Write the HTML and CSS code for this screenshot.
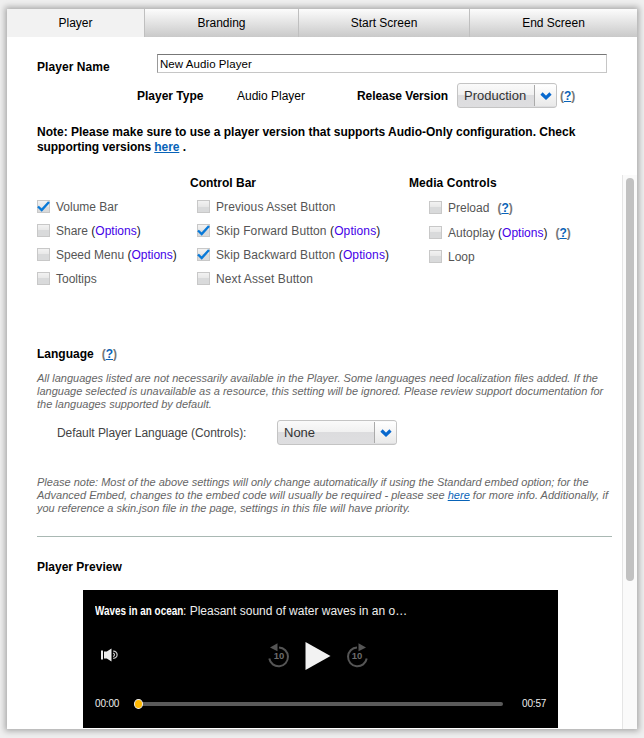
FILE: index.html
```html
<!DOCTYPE html>
<html lang="en">
<head>
<meta charset="utf-8">
<title>Player settings</title>
<link rel="stylesheet" href="styles.css">
</head>
<body>
<main class="panel">
  <nav class="tabs">
    <a class="tab active">Player</a>
    <a class="tab">Branding</a>
    <a class="tab">Start Screen</a>
    <a class="tab">End Screen</a>
  </nav>
  <section class="general">
    <div class="name-row">
      <label class="strong" for="name">Player Name</label>
      <input id="name" class="name-input" type="text" value="New Audio Player">
    </div>
    <div class="type-row">
      <span class="strong type-label">Player Type</span>
      <span class="type-value">Audio Player</span>
      <span class="strong version-label">Release Version</span>
      <span class="select version-select"><span class="select-text">Production</span><span class="select-arrow"><svg width="12" height="8" viewBox="0 0 12 8"><path d="M1.500 1.500 6 5.800 10.500 1.500"/></svg></span></span>
      <span class="help">(<a>?</a>)</span>
    </div>
    <p class="note"><span class="line1">Note: Please make sure to use a player version that supports Audio-Only configuration. Check</span><br><span class="line2">supporting versions <a>here</a> .</span></p>
  </section>
  <div class="scroll">
    <div class="content">
      <div class="options">
        <div class="col col-a">
          <h2>&nbsp;</h2>
          <div class="opt"><i class="box on"><svg viewBox="0 0 13 13"><path d="M1 6.500 4.700 10 12 2"/></svg></i><span>Volume Bar</span></div>
          <div class="opt"><i class="box"></i><span>Share <b>(<a>Options</a>)</b></span></div>
          <div class="opt"><i class="box"></i><span>Speed Menu <b>(<a>Options</a>)</b></span></div>
          <div class="opt"><i class="box"></i><span>Tooltips</span></div>
        </div>
        <div class="col col-b">
          <h2>Control Bar</h2>
          <div class="opt"><i class="box"></i><span>Previous Asset Button</span></div>
          <div class="opt"><i class="box on"><svg viewBox="0 0 13 13"><path d="M1 6.500 4.700 10 12 2"/></svg></i><span>Skip Forward Button <b>(<a>Options</a>)</b></span></div>
          <div class="opt"><i class="box on"><svg viewBox="0 0 13 13"><path d="M1 6.500 4.700 10 12 2"/></svg></i><span>Skip Backward Button <b>(<a>Options</a>)</b></span></div>
          <div class="opt"><i class="box"></i><span>Next Asset Button</span></div>
        </div>
        <div class="col col-c">
          <h2>Media Controls</h2>
          <div class="opt"><i class="box"></i><span>Preload</span><span class="help">(<a>?</a>)</span></div>
          <div class="opt"><i class="box"></i><span>Autoplay <b>(<a>Options</a>)</b></span><span class="help">(<a>?</a>)</span></div>
          <div class="opt"><i class="box"></i><span>Loop</span></div>
        </div>
      </div>
      <div class="language-head"><h2>Language</h2><span class="help">(<a>?</a>)</span></div>
      <p class="hint">All languages listed are not necessarily available in the Player. Some languages need localization files added. If the<br>language selected is unavailable as a resource, this setting will be ignored. Please review support documentation for<br>the languages supported by default.</p>
      <div class="language-row">
        <span class="language-label">Default Player Language (Controls):</span>
        <span class="select language-select"><span class="select-text">None</span><span class="select-arrow"><svg width="12" height="8" viewBox="0 0 12 8"><path d="M1.500 1.500 6 5.800 10.500 1.500"/></svg></span></span>
      </div>
      <p class="hint hint-embed">Please note: Most of the above settings will only change automatically if using the Standard embed option; for the<br><span class="wide">Advanced Embed, changes to the embed code will usually be required - please see <a>here</a> for more info. Additionally, if</span><br><span>you reference a skin.json file in the page, settings in this file will have priority.</span></p>
      <hr>
      <h2 class="preview-head">Player Preview</h2>
      <div class="player">
        <div class="title"><b>Waves in an ocean</b>: <span>Pleasant sound of water waves in an o…</span></div>
        <div class="controls">
          <svg class="volume" width="20" height="16" viewBox="0 0 20 16"><path fill="#eee" d="M1 3.500h2v9H1zM4 4.500h2.800L11.500 1.500v13L6.800 11.500H4z"/><path fill="none" stroke="#ccc" stroke-width="1.200" d="M13.200 4.200c4.900-.5 5.500 7.300 0 7.100M13 6.200c2 .2 2 3 0 3.300"/></svg>
          <span class="transport">
            <svg width="24" height="28" viewBox="0 0 24 28"><path class="ring" d="M12 5.500A9.400 9.400 0 1 1 2.300 16.500"/><path class="head" d="M3 5.500 10.500 1.200v8z"/><text x="12" y="17.200">10</text></svg>
            <svg class="play" width="26" height="30" viewBox="0 0 26 30"><path fill="#f2f2f2" d="M.5 1 25.500 15 .5 29z"/></svg>
            <svg width="24" height="28" viewBox="0 0 24 28"><path class="ring" d="M12 5.500A9.400 9.400 0 1 0 21.700 16.500"/><path class="head" d="M21 5.500 13.500 1.200v8z"/><text x="12" y="17.200">10</text></svg>
          </span>
        </div>
        <div class="timeline"><span>00:00</span><div class="track"><i class="knob"></i></div><span>00:57</span></div>
      </div>
    </div>
    <div class="scrollbar"><div class="thumb"></div></div>
  </div>
</main>
</body>
</html>
```
FILE: styles.css
```css
* { box-sizing: border-box; }
body {
  margin: 0;
  height: 738px;
  padding: 9px 7px;
  overflow: hidden;
  background: #efefef;
  font: 12px/16px "Liberation Sans", Arial, sans-serif;
  color: #000;
  white-space: nowrap;
}
h2, p { margin: 0; font-size: 12px; }
h2, .strong, .note { font-weight: bold; }
.panel {
  width: 630px;
  height: 720px;
  background: #fff;
  box-shadow: 0 0 6px 2px rgba(0, 0, 0, .3);
}
.tabs { display: grid; grid-template-columns: 137px 154px 171px 168px; height: 28px; }
.tab {
  border-left: 1px solid #bfbfbf;
  background: linear-gradient(#fcfcfc, #e3e3e3 50%, #c9c9c9);
  text-align: center;
  line-height: 28px;
}
.tab.active { border: 0; background: #f2f2f2; }
.general { height: 138px; padding: 17px 30px 0; }
.name-row { display: flex; height: 29px; }
.name-row .strong { width: 120px; padding-top: 5px; letter-spacing: .07px; }
.name-input {
  width: 450px;
  height: 19px;
  padding: 0 2px;
  border: 1px solid #c6c6c6;
  border-top-color: #777;
  border-left-color: #999;
  font: 11.5px "Liberation Sans", Arial, sans-serif;
  letter-spacing: .07px;
}
.type-row { display: flex; align-items: center; height: 25px; }
.type-label { width: 100px; margin-left: 100px; }
.type-value { width: 120px; }
.version-label { width: 100px; letter-spacing: -.07px; }
.select {
  display: flex;
  height: 25px;
  border: 1px solid #c4c4c4;
  border-radius: 3px;
  background: linear-gradient(#fafafa, #f0f0f0 50%, #dcdcde 50%, #dedee0);
  color: #333;
  font-size: 13px;
  line-height: 24px;
}
.select-text { flex: 1; padding-left: 6px; }
.select-arrow {
  display: flex;
  align-items: center;
  justify-content: center;
  width: 22px;
  margin: 1px 0;
  border-left: 1px solid #aaa;
  background: linear-gradient(#fff, #e9e9e9);
}
.select-arrow path { fill: none; stroke: #0868ce; stroke-width: 3.200; }
.version-select { width: 100px; }
.help { color: #777; font-weight: bold; }
.type-row .help { margin-left: 3px; }
.help a, .note a, .hint a { color: #0863b8; text-decoration: underline; }
.note { margin-top: 17px; line-height: 15px; }
.line2 { letter-spacing: -.07px; }
.scroll { display: flex; height: 554px; }
.content { width: 615px; padding: 0 9px 0 30px; overflow: hidden; }
.scrollbar { width: 15px; padding: 3px 2px 0 3px; border-left: 1px solid #e5e5e5; background: #fafafa; }
.thumb { width: 8px; height: 403px; border-radius: 4px; background: #c1c1c1; }
.options { display: grid; grid-template-columns: 160px 232px 1fr; height: 171px; }
.col h2 { height: 24px; }
.col-b h2 { margin-left: -7px; }
.col-c h2 { height: 25px; margin-left: -20px; letter-spacing: .07px; }
.col-b .opt { letter-spacing: .1px; }
.opt { display: flex; align-items: center; height: 16px; margin-bottom: 8px; color: #555; }
.col-c .opt:nth-child(2) { margin-bottom: 9px; }
.opt b { color: #222; font-weight: normal; }
.opt b a { color: #4400e8; }
.opt .help { margin-left: 8px; }
.box {
  width: 13px;
  height: 13px;
  margin: 0 6px 2px 0;
  border: 1px solid #c8c8c8;
  background: linear-gradient(#f2f2f2, #e7e7e7 50%, #d9dadb 50%);
}
.box svg { display: block; width: 13px; height: 13px; margin: -1px; }
.box path { fill: none; stroke: #0879d8; stroke-width: 2.400; }
.language-head { display: flex; }
.language-head .help { margin-left: 8px; }
.hint { margin-top: 10px; color: #666; font-size: 11px; line-height: 13px; font-style: italic; }
.language-row { display: flex; align-items: center; margin-top: 9px; padding-left: 20px; color: #444; }
.language-label { width: 220px; letter-spacing: -.06px; }
.language-select { width: 120px; }
.hint-embed { margin-top: 31px; }
.wide { letter-spacing: .02px; }
hr { height: 1px; margin: 21px 0 22px; margin-right: 1px; border: 0; background: #a9b8b3; }
.player { width: 475px; height: 138px; margin: 15px 0 0 46px; padding: 13px 12px 0; background: #000; color: #eee; }
.title { height: 16px; color: #eee; }
.title b { display: inline-block; width: 88px; color: #fff; transform: scaleX(.825); transform-origin: left; }
.controls { display: flex; height: 75px; padding: 22px 0 0 5px; }
.transport { display: flex; align-items: center; height: 30px; margin-left: 147px; gap: 14px; }
.controls .volume { margin-top: 6px; }
.ring { fill: none; stroke: #555; stroke-width: 2; }
.head { fill: #555; }
.controls text { fill: #6c6c6c; font: bold 9.5px "Liberation Sans", Arial, sans-serif; text-anchor: middle; }
.timeline { display: flex; align-items: center; height: 20px; font-size: 10px; letter-spacing: -.15px; }
.timeline span { width: 24px; }
.track { position: relative; width: 365px; height: 4px; margin: 0 19px; border-radius: 2px; background: #5a5a5a; }
.knob { position: absolute; left: -4px; top: -3px; width: 9px; height: 10px; border: 1px solid #eee; border-radius: 50%; background: #ffb800; }
```
